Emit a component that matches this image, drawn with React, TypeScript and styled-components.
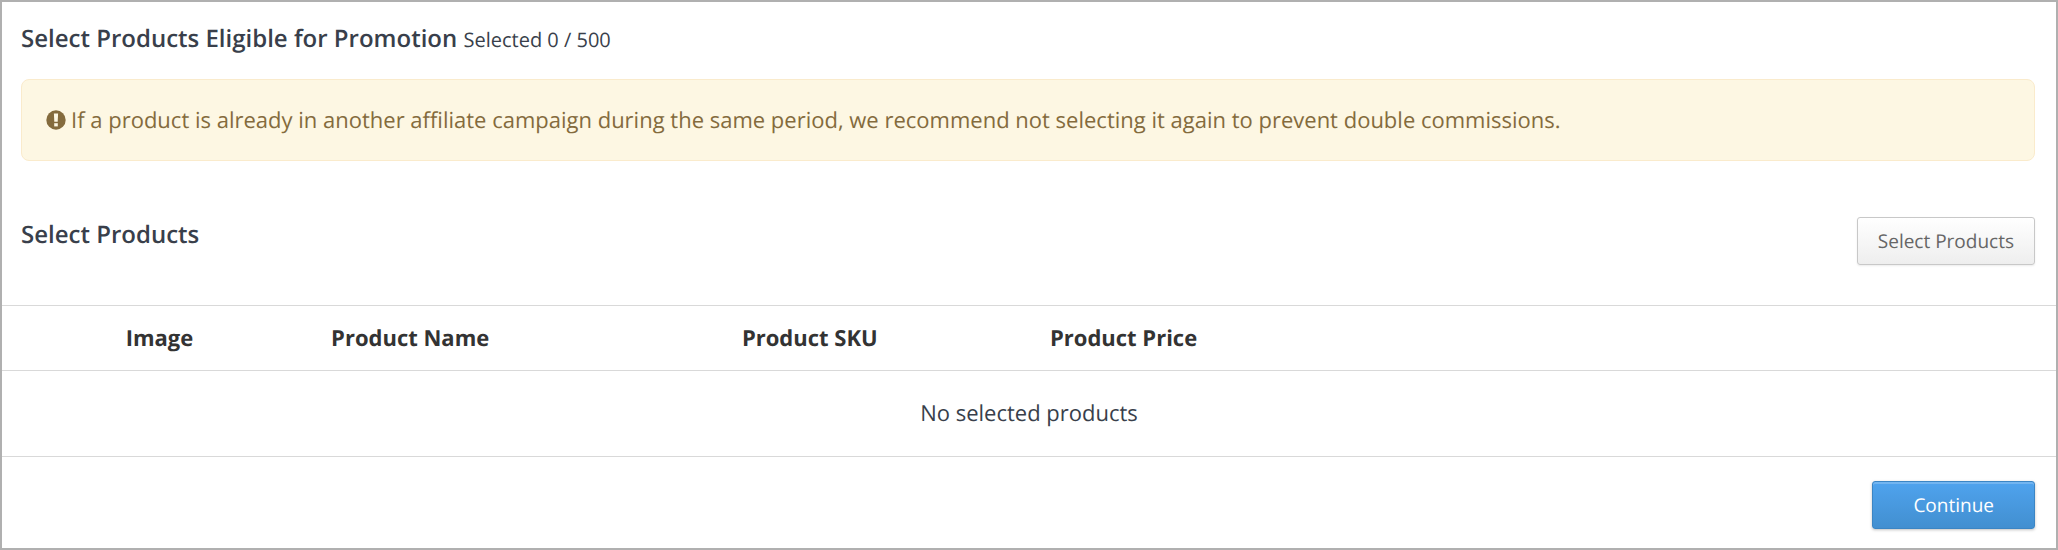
import React from "react";
import styled, { createGlobalStyle } from "styled-components";

const GlobalStyle = createGlobalStyle`
  *, *::before, *::after { box-sizing: border-box; }
  body {
    margin: 0;
    background: #fff;
    color: #393f4b;
    font-family: "Open Sans", "Noto Sans", sans-serif;
    font-size: 22px;
    text-rendering: geometricPrecision;
  }
`;

const Panel = styled.main`
  min-height: 100vh;
  border: 2px solid #b0b0b0;
  background: #fff;
`;

const Section = styled.section`
  padding: 20px 21px 0 19px;
`;

const Title = styled.h1`
  margin: 0;
  font-size: 24px;
  line-height: 34px;
  font-weight: 600;
`;

const Count = styled.small`
  font-size: 20px;
  font-weight: 400;
`;

const Notice = styled.p`
  display: flex;
  align-items: center;
  gap: 5px;
  margin: 22px 0 0;
  padding: 24px;
  border: 1px solid #faebcc;
  border-radius: 8px;
  background: #fdf7e3;
  color: #846b3d;
  line-height: 32px;
`;

const Toolbar = styled.header`
  display: flex;
  justify-content: space-between;
  align-items: flex-start;
  padding: 56px 21px 40px 19px;
`;

const Subtitle = styled.h2`
  margin: 0;
  font-size: 24px;
  line-height: 36px;
  font-weight: 600;
`;

const Button = styled.button<{ $primary?: boolean }>`
  height: 48px;
  padding: 0 ${(p) => (p.$primary ? 40 : 20)}px;
  border: 1px solid ${(p) => (p.$primary ? "#3b85c4" : "#c8c8c8")};
  border-radius: 3px;
  background: ${(p) =>
    p.$primary
      ? "linear-gradient(#4fa3ee, #428fd0)"
      : "linear-gradient(#ffffff, #eeeeee)"};
  box-shadow: ${(p) =>
    p.$primary
      ? "inset 0 2px 0 rgba(255, 255, 255, 0.2), 0 1px 3px rgba(0, 0, 0, 0.25)"
      : "0 1px 2px rgba(0, 0, 0, 0.08)"};
  color: ${(p) => (p.$primary ? "#fff" : "#666")};
  font-family: inherit;
  font-size: 19px;
  text-rendering: inherit;
  cursor: pointer;
`;

const Table = styled.table`
  width: 100%;
  border-collapse: collapse;
  table-layout: fixed;
`;

const Head = styled.th<{ $width?: string }>`
  width: ${(p) => p.$width ?? "auto"};
  height: 65px;
  padding: 0 0 0 21px;
  border-top: 1px solid #d9d9d9;
  border-bottom: 1px solid #d9d9d9;
  color: #333;
  font-weight: 700;
  text-align: left;
`;

const Empty = styled.td`
  height: 86px;
  padding: 0 0 2px;
  border-bottom: 1px solid #d9d9d9;
  text-align: center;
`;

const Actions = styled.footer`
  display: flex;
  justify-content: flex-end;
  padding: 24px 21px 18px;
`;

const AlertIcon = () => (
  <svg width="20" height="20" viewBox="0 0 20 20" aria-hidden="true">
    <circle cx="10" cy="10" r="9.7" fill="#846b3d" />
    <path d="M7.9 3.4h4.2l-.4 8.4H8.3z" fill="#fdf7e3" />
    <path d="M8.2 13.2h3.6v3.2H8.2z" fill="#fdf7e3" />
  </svg>
);

export default function App() {
  return (
    <Panel>
      <GlobalStyle />
      <Section>
        <Title>
          Select Products Eligible for Promotion <Count>Selected 0 / 500</Count>
        </Title>
        <Notice role="alert">
          <AlertIcon />
          If a product is already in another affiliate campaign during the same period, we recommend not selecting it again to prevent double commissions.
        </Notice>
      </Section>
      <Toolbar>
        <Subtitle>Select Products</Subtitle>
        <Button type="button">Select Products</Button>
      </Toolbar>
      <Table>
        <thead>
          <tr>
            <Head as="td" $width="5%" />
            <Head scope="col" $width="10%">Image</Head>
            <Head scope="col" $width="20%">Product Name</Head>
            <Head scope="col" $width="15%">Product SKU</Head>
            <Head scope="col">Product Price</Head>
          </tr>
        </thead>
        <tbody>
          <tr>
            <Empty colSpan={5}>No selected products</Empty>
          </tr>
        </tbody>
      </Table>
      <Actions>
        <Button type="button" $primary>Continue</Button>
      </Actions>
    </Panel>
  );
}
